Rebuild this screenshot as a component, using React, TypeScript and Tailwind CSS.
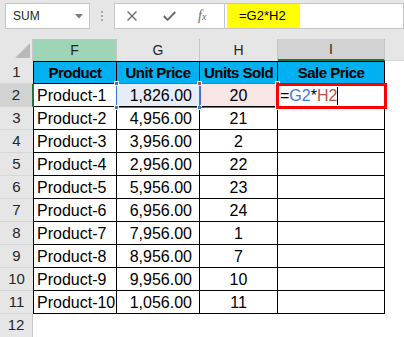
import React from "react";

const data: [string, string, string][] = [
  ["Product-1", "1,826.00", "20"],
  ["Product-2", "4,956.00", "21"],
  ["Product-3", "3,956.00", "2"],
  ["Product-4", "2,956.00", "22"],
  ["Product-5", "5,956.00", "23"],
  ["Product-6", "6,956.00", "24"],
  ["Product-7", "7,956.00", "1"],
  ["Product-8", "8,956.00", "7"],
  ["Product-9", "9,956.00", "10"],
  ["Product-10", "1,056.00", "11"],
];

function Handle({ x, y, color }: { x: number; y: number; color: string }) {
  return (
    <div
      className="absolute w-[5px] h-[5px] border border-white"
      style={{ left: x, top: y, backgroundColor: color }}
    />
  );
}

export default function App() {
  return (
    <div className="relative w-[404px] h-[337px] overflow-hidden bg-white font-['Liberation_Sans',Arial,sans-serif] text-black">
      {/* Toolbar */}
      <div className="h-[39px] bg-[#e6e6e6] flex items-start pt-[3px] pl-[5px]">
        <div className="w-[102px] h-[26px] bg-white border border-[#c6c6c6] flex items-center justify-between pl-[7px] pr-[6px]">
          <span className="text-[12px] text-[#262626]">SUM</span>
          <svg width="8" height="5" viewBox="0 0 8 5">
            <path d="M0 0 L8 0 L4 4.5 Z" fill="#7a7a7a" />
          </svg>
        </div>
        <div className="w-[30px] h-[26px] flex flex-col items-center justify-center gap-[2px]">
          <div className="w-[2px] h-[2px] bg-[#a8a8a8]" />
          <div className="w-[2px] h-[2px] bg-[#a8a8a8]" />
          <div className="w-[2px] h-[2px] bg-[#a8a8a8]" />
        </div>
        <div className="w-[290px] h-[26px] bg-white border border-[#c6c6c6] flex shrink-0">
          <div className="w-[110px] h-full border-r border-[#c6c6c6] flex items-center">
            <svg className="ml-[12px]" width="10" height="10" viewBox="0 0 10 10">
              <path d="M0.5 0.5 L9.5 9.5 M9.5 0.5 L0.5 9.5" stroke="#6b6b6b" strokeWidth="1.4" />
            </svg>
            <svg className="ml-[26px]" width="13" height="10" viewBox="0 0 13 10">
              <path d="M0.8 5 L4.6 8.8 L12.3 1" stroke="#6b6b6b" strokeWidth="1.9" fill="none" />
            </svg>
            <span className="ml-[22px] font-['Liberation_Serif',serif] italic text-[#6b6b6b] text-[14px] leading-none">
              f<span className="text-[10px]">x</span>
            </span>
          </div>
          <div className="flex-1 pl-[2px]">
            <div className="h-full w-[73px] bg-[#ffff00] flex items-center pl-[12px] text-[13px] text-black">
              =G2*H2
            </div>
          </div>
        </div>
      </div>

      {/* Grid */}
      <div className="grid grid-cols-[33px_84px_83px_78px_107px_1fr] grid-rows-[22px_repeat(12,23px)]">
        {/* Column header row */}
        <div className="relative bg-[#e6e6e6] border-r border-[#c6c6c6]">
          <svg className="absolute left-0 top-0" width="33" height="22" viewBox="0 0 33 22">
            <polygon points="15,19 30,19 30,4" fill="#b9b9b9" />
          </svg>
        </div>
        <div className="bg-[#9fd5b7] border-r border-[#c6c6c6] text-center text-[14px] leading-[22px] text-[#262626]">F</div>
        <div className="bg-[#e6e6e6] border-r border-[#c6c6c6] text-center text-[14px] leading-[22px] text-[#262626]">G</div>
        <div className="bg-[#e6e6e6] border-r border-[#c6c6c6] text-center text-[14px] leading-[22px] text-[#262626]">H</div>
        <div className="bg-[#d2d2d2] border-r border-[#c6c6c6] border-b-2 border-b-[#217346] text-center text-[14px] leading-[21px] text-[#262626]">I</div>
        <div className="bg-[#e6e6e6] border-b border-[#d4d4d4]" />

        {/* Row 1 */}
        <div className="bg-[#e6e6e6] border-b border-[#d6d6d6] text-center text-[15px] leading-[22px] text-[#262626]">1</div>
        {["Product", "Unit Price", "Units Sold", "Sale Price"].map((h, i) => (
          <div
            key={h}
            className={
              "bg-[#00b0f0] border-t border-r border-b border-black text-center font-bold text-[15px] tracking-[-0.5px] leading-[21px] whitespace-nowrap overflow-hidden" +
              (i === 0 ? " border-l" : "")
            }
          >
            {h}
          </div>
        ))}
        <div />

        {/* Data rows */}
        {data.map(([p, price, units], idx) => {
          const rowNum = idx + 2;
          const active = rowNum === 2;
          return (
            <React.Fragment key={p}>
              <div
                className={
                  "border-b text-center text-[15px] leading-[22px] text-[#262626] " +
                  (active
                    ? "bg-[#d2d2d2] border-b-[#d6d6d6] border-r border-r-[#217346]"
                    : "bg-[#e6e6e6] border-[#d6d6d6]")
                }
              >
                {rowNum}
              </div>
              <div
                className={
                  "border-l border-r border-b border-black pl-[3px] pt-[1px] text-[16px] leading-[22px] whitespace-nowrap overflow-hidden" +
                  (active ? " border-l-[#217346]" : "")
                }
              >
                {p}
              </div>
              <div
                className={
                  "border-r border-b border-black pr-[7px] pt-[1px] text-right text-[16px] leading-[22px]" +
                  (active ? " bg-[#e6edf7]" : "")
                }
              >
                {price}
              </div>
              <div
                className={
                  "border-r border-b border-black pt-[1px] text-center text-[16px] leading-[22px]" +
                  (active ? " bg-[#f8e5e5]" : "")
                }
              >
                {units}
              </div>
              <div className="border-r border-b border-black pl-[2px] pt-[1px] text-[16px] leading-[22px] whitespace-nowrap flex items-start">
                {active && (
                  <>
                    <span>=</span>
                    <span className="text-[#3b78d8]">G2</span>
                    <span>*</span>
                    <span className="text-[#c0504d]">H2</span>
                    <span className="inline-block w-[1px] h-[18px] bg-black mt-[2px]" />
                  </>
                )}
              </div>
              <div />
            </React.Fragment>
          );
        })}

        {/* Row 12 */}
        <div className="bg-[#e6e6e6] border-r border-[#c6c6c6] text-center text-[15px] leading-[22px] text-[#262626]">12</div>
        <div />
        <div />
        <div />
        <div />
        <div />
      </div>

      {/* Selection overlays */}
      <div className="absolute left-[116px] top-[83px] w-[85px] h-[25px] border border-[#4472c4] pointer-events-none" />
      <Handle x={114} y={81} color="#4472c4" />
      <Handle x={114} y={105} color="#4472c4" />
      <Handle x={197} y={105} color="#4472c4" />
      <div className="absolute left-[199px] top-[83px] w-[80px] h-[25px] border border-[#c0504d] pointer-events-none" />
      <Handle x={197} y={81} color="#c0504d" />
      <Handle x={275} y={81} color="#c0504d" />
      <Handle x={275} y={105} color="#c0504d" />

      {/* Red annotation box */}
      <div className="absolute left-[276px] top-[83px] w-[111px] h-[26px] border-[3px] border-[#ff0000] pointer-events-none" />
    </div>
  );
}
